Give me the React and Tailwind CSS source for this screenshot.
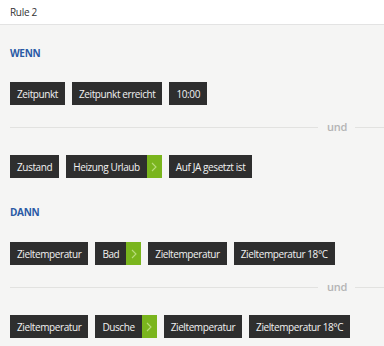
import React from "react";

const Chip = ({label, arrow}) => (
    <div className="flex h-[23px] shrink-0 items-stretch whitespace-nowrap bg-[#2e2e2e] text-[10px] leading-none tracking-[-0.4px] text-[#f2f2f2]">
        <span className="flex items-center px-[7px]">{label}</span>
        {arrow && (
            <span className="flex w-[15px] items-center justify-center bg-[#7ab51d] text-[#b9dc7c]">
                <svg width="6" height="10" viewBox="0 0 6 10" fill="none">
                    <path d="M1 1l4 4-4 4" stroke="currentColor" strokeWidth="1.1"/>
                </svg>
            </span>
        )}
    </div>
);

const Row = ({items, className}) => (
    <div className={`flex gap-[7px] pl-[10px] ${className}`}>
        {items.map((it, i) => (
            <Chip key={i} label={it.label} arrow={it.arrow}/>
        ))}
    </div>
);

const Divider = ({className}) => (
    <div className={`flex h-[14px] items-center pl-[10px] ${className}`}>
        <div className="h-px flex-1 bg-[#e2e2e0]"/>
        <span className="pl-[9px] pr-[8px] text-[11px] font-semibold tracking-[-0.3px] text-[#b4b4b4]">und</span>
        <div className="h-px w-[29px] bg-[#e2e2e0]"/>
    </div>
);

const Heading = ({children, className}) => (
    <div className={`pl-[10px] text-[10px] font-bold leading-[14px] tracking-[-0.3px] text-[#2a5aa5] ${className}`}>
        {children}
    </div>
);

export default function App() {
    return (
        <div className="h-[346px] w-[384px] overflow-hidden bg-[#f5f5f4] font-['Open_Sans',sans-serif]">
            <div className="flex h-[25px] items-center border-b border-[#e3e3e3] bg-white pl-[10px] text-[10px] tracking-[-0.3px] text-[#333]">
                Rule 2
            </div>
            <Heading className="mt-[21px]">WENN</Heading>
            <Row
                className="mt-[22px]"
                items={[{label: "Zeitpunkt"}, {label: "Zeitpunkt erreicht"}, {label: "10:00"}]}
            />
            <Divider className="mt-[15px]"/>
            <Row
                className="mt-[21px]"
                items={[{label: "Zustand"}, {label: "Heizung Urlaub", arrow: true}, {label: "Auf JA gesetzt ist"}]}
            />
            <Heading className="mt-[27px]">DANN</Heading>
            <Row
                className="mt-[23px]"
                items={[
                    {label: "Zieltemperatur"},
                    {label: "Bad", arrow: true},
                    {label: "Zieltemperatur"},
                    {label: "Zieltemperatur 18°C"},
                ]}
            />
            <Divider className="mt-[15px]"/>
            <Row
                className="mt-[21px]"
                items={[
                    {label: "Zieltemperatur"},
                    {label: "Dusche", arrow: true},
                    {label: "Zieltemperatur"},
                    {label: "Zieltemperatur 18°C"},
                ]}
            />
        </div>
    );
}
